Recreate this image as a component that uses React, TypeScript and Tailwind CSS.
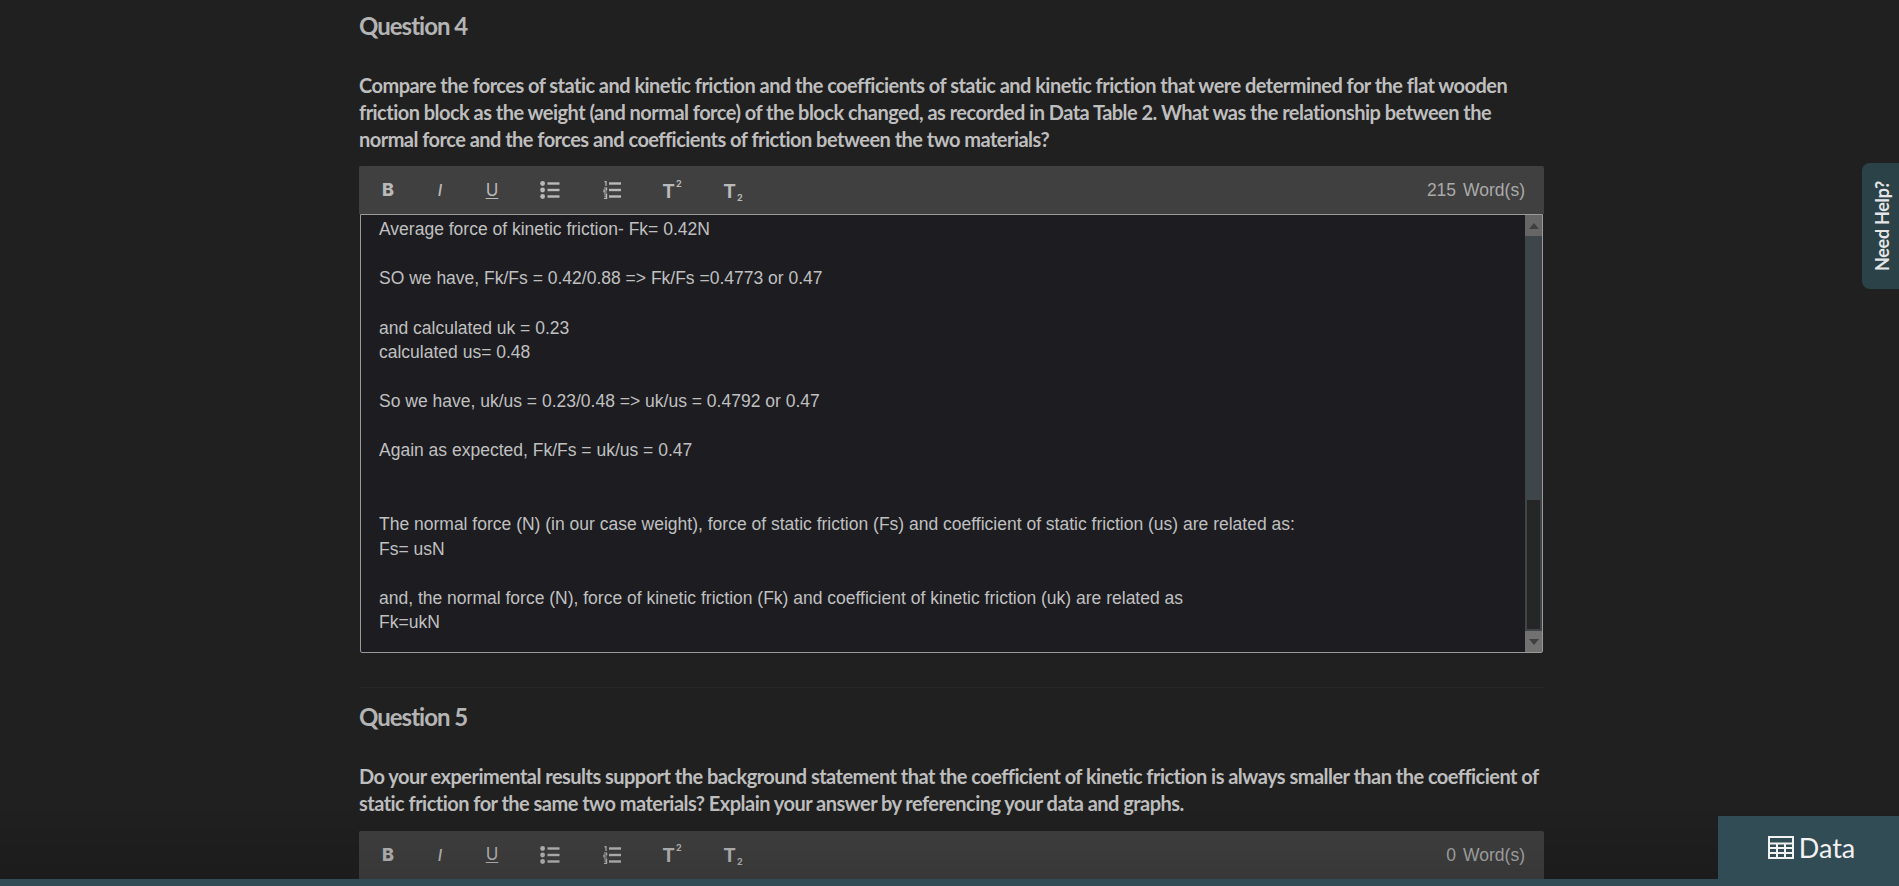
import React from "react";

function ListIcon() {
  return (
    <svg width="20" height="18" viewBox="0 0 20 18" className="block">
      <circle cx="2.6" cy="2.5" r="2.4" fill="#b9b9b9" />
      <circle cx="2.6" cy="9" r="2.4" fill="#b9b9b9" />
      <circle cx="2.6" cy="15.5" r="2.4" fill="#b9b9b9" />
      <rect x="7.5" y="1.3" width="12" height="2.4" fill="#b9b9b9" />
      <rect x="7.5" y="7.8" width="12" height="2.4" fill="#b9b9b9" />
      <rect x="7.5" y="14.3" width="12" height="2.4" fill="#b9b9b9" />
    </svg>
  );
}

function NumIcon() {
  return (
    <svg width="18" height="18" viewBox="0 0 18 18" className="block">
      <path d="M1.5 1 L3 0.4 V5 M1 7 H3.6 V9 H1 V11 H3.8 M1 13 H3.6 V17.4 H1 M1.5 15.2 H3.6" fill="none" stroke="#b9b9b9" strokeWidth="1.2" />
      <rect x="6" y="1.3" width="12" height="2.4" fill="#b9b9b9" />
      <rect x="6" y="7.8" width="12" height="2.4" fill="#b9b9b9" />
      <rect x="6" y="14.3" width="12" height="2.4" fill="#b9b9b9" />
    </svg>
  );
}

function Toolbar({ words }: { words: string }) {
  return (
    <div className="flex h-12 items-center justify-between rounded-t-[2px] bg-[#404040] pr-[19px] font-['Liberation_Sans',sans-serif] text-[#b9b9b9]">
      <div className="flex items-center font-['Inter',sans-serif]">
        <span className="ml-[9px] flex w-[40px] justify-center text-[18px] leading-none font-extrabold">B</span>
        <span className="ml-[12px] flex w-[40px] justify-center text-[16px] leading-none font-medium italic">I</span>
        <span className="ml-[12px] flex w-[40px] justify-center text-[17px] leading-none underline underline-offset-2">U</span>
        <span className="ml-[18px] flex w-[40px] justify-center"><ListIcon /></span>
        <span className="ml-[22px] flex w-[40px] justify-center"><NumIcon /></span>
        <span className="ml-[20px] flex w-[40px] justify-center pt-[2px] text-[19px] leading-none font-bold">
          T<span className="mt-[-3px] ml-px text-[9px] leading-[10px]">2</span>
        </span>
        <span className="ml-[21px] flex w-[40px] items-end justify-center pt-[2px] text-[19px] leading-none font-bold">
          T<span className="mb-[-2px] ml-px text-[9px] leading-[10px]">2</span>
        </span>
      </div>
      <div className="flex gap-[7px] text-[17.5px] text-[#aaaaaa]">
        <span>{words}</span>
        <span>Word(s)</span>
      </div>
    </div>
  );
}

const lines = [
  "Average force of kinetic friction- Fk= 0.42N",
  "",
  "SO we have, Fk/Fs = 0.42/0.88 => Fk/Fs =0.4773 or 0.47",
  "",
  "and calculated uk = 0.23",
  "calculated us= 0.48",
  "",
  "So we have, uk/us = 0.23/0.48 => uk/us = 0.4792 or 0.47",
  "",
  "Again as expected, Fk/Fs = uk/us = 0.47",
  "",
  "",
  "The normal force (N) (in our case weight), force of static friction (Fs) and coefficient of static friction (us) are related as:",
  "Fs= usN",
  "",
  "and, the normal force (N), force of kinetic friction (Fk) and coefficient of kinetic friction (uk) are related as",
  "Fk=ukN",
];

function Scrollbar() {
  return (
    <div className="flex w-[17px] shrink-0 flex-col bg-[#3f4649]">
      <div className="flex h-[21px] items-center justify-center bg-[#666666]">
        <div className="h-0 w-0 border-x-[5px] border-b-[6px] border-x-transparent border-b-[#3f3f3f]" />
      </div>
      <div className="flex-1" />
      <div className="mx-[2px] mb-[2px] h-[129px] bg-[#262626]" />
      <div className="flex h-[21px] items-center justify-center bg-[#717171]">
        <div className="h-0 w-0 border-x-[5px] border-t-[6px] border-x-transparent border-t-[#3f3f3f]" />
      </div>
    </div>
  );
}

export default function App() {
  return (
    <div className="relative h-[886px] overflow-hidden bg-[#202020] font-['Lato',sans-serif]">
      <div className="ml-[359px] w-[1185px] pt-[11px]">
        <h2 className="text-[24px] leading-[30px] font-bold tracking-[-1px] text-[#b4b4b4]">Question 4</h2>
        <p className="mt-[31px] text-[20px] leading-[26.8px] font-bold tracking-[-0.53px] text-[#bebebe]">
          Compare the forces of static and kinetic friction and the coefficients of static and kinetic friction that were determined for the flat wooden
          friction block as the weight (and normal force) of the block changed, as recorded in Data Table 2. What was the relationship between the normal force and the forces and coefficients of friction between the two materials?
        </p>
        <div className="mt-[14px]">
          <Toolbar words="215" />
          <div className="mx-px flex h-[439px] rounded-b-[2px] border border-[#9a9a9a] bg-[#1c1c21]">
            <div className="flex-1 overflow-hidden pl-[18px] pt-[2px] font-['Liberation_Sans',sans-serif] text-[17.5px] leading-[24.5px] text-[#c0c0c0]">
              {lines.map((l, i) => (
                <div key={i} className="h-[24.55px] whitespace-pre">{l}</div>
              ))}
            </div>
            <Scrollbar />
          </div>
        </div>
        <div className="mt-[34px] h-px bg-[#282828]" />
        <h2 className="mt-[14px] text-[24px] leading-[30px] font-bold tracking-[-1px] text-[#b4b4b4]">Question 5</h2>
        <p className="mt-[31px] text-[20px] leading-[26.8px] font-bold tracking-[-0.53px] text-[#bebebe]">
          Do your experimental results support the background statement that the coefficient of kinetic friction is always smaller than the coefficient of static friction for the same two materials? Explain your answer by referencing your data and graphs.
        </p>
        <div className="mt-[14px]">
          <Toolbar words="0" />
          <div className="ml-px mr-[2px] h-px bg-[#9a9a9a]" />
        </div>
      </div>

      <div className="absolute right-0 top-[163px] flex h-[126px] w-[37px] items-center justify-center rounded-l-[8px] bg-[#2b4249] pl-[3px]">
        <span className="-rotate-90 whitespace-nowrap text-[18px] font-bold leading-none tracking-[-0.3px] text-[#e6e6e6]">Need Help?</span>
      </div>

      <div className="pointer-events-none absolute bottom-0 left-0 right-0 h-[86px] bg-gradient-to-b from-transparent to-black/15" />
      <div className="absolute bottom-0 left-0 right-0 h-[7px] bg-[#314c54]" />
      <div className="absolute bottom-0 right-0 flex h-[70px] w-[181px] items-start justify-center gap-[5px] bg-[#314c54] pl-[6px] pt-[17px] text-[27px] leading-[30px] text-[#f2f2f2]">
        <svg width="26" height="23" viewBox="0 0 26 23" className="mt-[3px]">
          <path d="M1 1H25V22H1Z M1 7.5H25 M1 12H25 M1 17H25 M9 7.5V22 M17 7.5V22" fill="none" stroke="#f2f2f2" strokeWidth="2" />
        </svg>
        <span>Data</span>
      </div>
    </div>
  );
}
